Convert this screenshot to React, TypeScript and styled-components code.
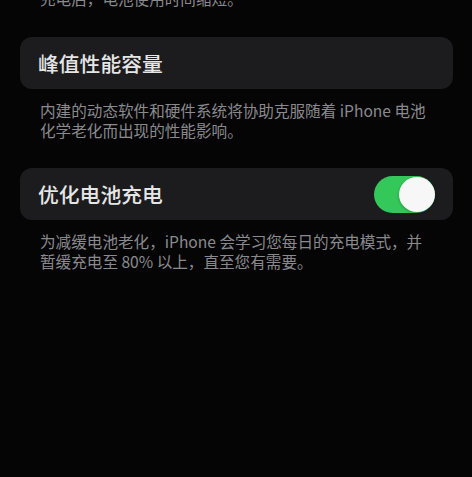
import React from "react";
import styled, { createGlobalStyle } from "styled-components";

const Global = createGlobalStyle`
  html, body {
    margin: 0;
    padding: 0;
    background: #050505;
  }
  body {
    font-family: "Noto Sans CJK SC", "Noto Sans", sans-serif;
    -webkit-font-smoothing: antialiased;
  }
`;

const Page = styled.div`
  width: 472px;
  height: 477px;
  overflow: hidden;
  background: #050505;
  padding: 0 19px 0 20px;
  box-sizing: border-box;
`;

const Section = styled.section<{ $gap?: number }>`
  margin-top: ${(p) => p.$gap ?? 28}px;
`;

const Card = styled.div`
  height: 52px;
  background: #1c1c1e;
  border-radius: 12px;
  display: flex;
  align-items: center;
  justify-content: space-between;
  padding: 0 18px;
  box-sizing: border-box;
`;

const Title = styled.span`
  color: #e6e6e6;
  font-size: 20.8px;
  font-weight: 500;
  letter-spacing: 0;
`;

const Note = styled.p<{ $clip?: boolean }>`
  margin: ${(p) => (p.$clip ? "-12px 0 0" : "11px 0 0")};
  padding: 0 20px;
  color: #8a8a8e;
  font-size: 15.6px;
  line-height: 20px;
  white-space: nowrap;
`;

const Switch = styled.div<{ $on: boolean }>`
  width: 61px;
  height: 37px;
  border-radius: 19px;
  background: ${(p) => (p.$on ? "#34c759" : "#39393d")};
  position: relative;
  flex-shrink: 0;
  &::after {
    content: "";
    position: absolute;
    top: 1px;
    ${(p) => (p.$on ? "right: 0px;" : "left: 1px;")}
    width: 36px;
    height: 35px;
    border-radius: 50%;
    background: #f7f7f7;
    box-shadow: 0 1px 3px rgba(0, 0, 0, 0.25);
  }
`;

export default function App() {
  return (
    <Page>
      <Global />
      <Note $clip>充电后，电池使用时间缩短。</Note>

      <Section $gap={29}>
        <Card>
          <Title>峰值性能容量</Title>
        </Card>
        <Note>
          内建的动态软件和硬件系统将协助克服随着 iPhone 电池
          <br />
          化学老化而出现的性能影响。
        </Note>
      </Section>

      <Section>
        <Card>
          <Title>优化电池充电</Title>
          <Switch $on />
        </Card>
        <Note>
          为减缓电池老化，iPhone 会学习您每日的充电模式，并
          <br />
          暂缓充电至 80% 以上，直至您有需要。
        </Note>
      </Section>
    </Page>
  );
}
